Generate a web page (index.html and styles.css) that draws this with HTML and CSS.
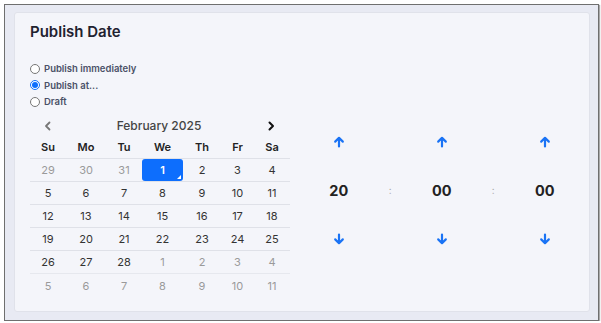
FILE: index.html
```html
<!DOCTYPE html>
<html>
<head>
  <title>Publish Date</title>
  <link rel="stylesheet" href="styles.css">
</head>
<body>
  <div class="frame">
    <div class="card">
      <h2 class="card-title">Publish Date</h2>

      <div class="options">
        <label class="option"><input type="radio" name="mode" value="now"> Publish immediately</label>
        <label class="option"><input type="radio" name="mode" value="at" checked> Publish at...</label>
        <label class="option"><input type="radio" name="mode" value="draft"> Draft</label>
      </div>

      <div class="picker">
        <div class="calendar">
          <div class="cal-head">
            <button class="nav prev" type="button">
              <svg width="10" height="10" viewBox="0 0 10 10"><path d="M6.5 1.5 L3 5 L6.5 8.5" fill="none" stroke="currentColor" stroke-width="1.8" stroke-linecap="round" stroke-linejoin="round"/></svg>
            </button>
            <div class="month">February 2025</div>
            <button class="nav next" type="button">
              <svg width="10" height="10" viewBox="0 0 10 10"><path d="M3.5 1.5 L7 5 L3.5 8.5" fill="none" stroke="currentColor" stroke-width="2" stroke-linecap="round" stroke-linejoin="round"/></svg>
            </button>
          </div>

          <div class="grid weekdays">
            <span>Su</span><span>Mo</span><span>Tu</span><span>We</span><span>Th</span><span>Fr</span><span>Sa</span>
          </div>
          <div class="grid week">
            <span class="muted">29</span><span class="muted">30</span><span class="muted">31</span><span class="selected">1</span><span>2</span><span>3</span><span>4</span>
          </div>
          <div class="grid week">
            <span>5</span><span>6</span><span>7</span><span>8</span><span>9</span><span>10</span><span>11</span>
          </div>
          <div class="grid week">
            <span>12</span><span>13</span><span>14</span><span>15</span><span>16</span><span>17</span><span>18</span>
          </div>
          <div class="grid week">
            <span>19</span><span>20</span><span>21</span><span>22</span><span>23</span><span>24</span><span>25</span>
          </div>
          <div class="grid week">
            <span>26</span><span>27</span><span>28</span><span class="muted">1</span><span class="muted">2</span><span class="muted">3</span><span class="muted">4</span>
          </div>
          <div class="grid week">
            <span class="muted">5</span><span class="muted">6</span><span class="muted">7</span><span class="muted">8</span><span class="muted">9</span><span class="muted">10</span><span class="muted">11</span>
          </div>
        </div>

        <div class="time">
          <button class="step" type="button"><svg width="12" height="12" viewBox="0 0 12 12"><path d="M6 10.5 V2 M2.2 5.6 L6 1.8 L9.8 5.6" fill="none" stroke="currentColor" stroke-width="2.2" stroke-linecap="round" stroke-linejoin="round"/></svg></button>
          <span></span>
          <button class="step" type="button"><svg width="12" height="12" viewBox="0 0 12 12"><path d="M6 10.5 V2 M2.2 5.6 L6 1.8 L9.8 5.6" fill="none" stroke="currentColor" stroke-width="2.2" stroke-linecap="round" stroke-linejoin="round"/></svg></button>
          <span></span>
          <button class="step" type="button"><svg width="12" height="12" viewBox="0 0 12 12"><path d="M6 10.5 V2 M2.2 5.6 L6 1.8 L9.8 5.6" fill="none" stroke="currentColor" stroke-width="2.2" stroke-linecap="round" stroke-linejoin="round"/></svg></button>

          <span class="value">20</span>
          <span class="colon">:</span>
          <span class="value">00</span>
          <span class="colon">:</span>
          <span class="value">00</span>

          <button class="step" type="button"><svg width="12" height="12" viewBox="0 0 12 12"><path d="M6 1.5 V10 M2.2 6.4 L6 10.2 L9.8 6.4" fill="none" stroke="currentColor" stroke-width="2.2" stroke-linecap="round" stroke-linejoin="round"/></svg></button>
          <span></span>
          <button class="step" type="button"><svg width="12" height="12" viewBox="0 0 12 12"><path d="M6 1.5 V10 M2.2 6.4 L6 10.2 L9.8 6.4" fill="none" stroke="currentColor" stroke-width="2.2" stroke-linecap="round" stroke-linejoin="round"/></svg></button>
          <span></span>
          <button class="step" type="button"><svg width="12" height="12" viewBox="0 0 12 12"><path d="M6 1.5 V10 M2.2 6.4 L6 10.2 L9.8 6.4" fill="none" stroke="currentColor" stroke-width="2.2" stroke-linecap="round" stroke-linejoin="round"/></svg></button>
        </div>
      </div>
    </div>
  </div>
</body>
</html>
```

FILE: styles.css
```css
body {
  margin: 0;
  background: #fff;
  font-family: Inter, "Noto Sans", sans-serif;
  color: #222;
}
.frame {
  width: 576px;
  height: 300px;
  margin: 4px 0 0 4px;
  padding: 7px 8px 8px 9px;
  border: 1px solid #6f6f6f;
  background: #e8eaf3;
  box-shadow: 1px 1px 1px #aaa;
}
.card {
  box-sizing: border-box;
  height: 300px;
  padding: 9px 15px 0 15px;
  background: #f4f5fa;
  border: 1px solid #e0e2ea;
  border-radius: 3px;
}
.card-title {
  margin: 0;
  font-size: 15px;
  font-weight: 600;
  color: #1f2230;
  line-height: 20px;
}
.options {
  margin-top: 20px;
  display: flex;
  flex-direction: column;
  gap: 3px;
}
.option {
  display: flex;
  align-items: center;
  gap: 4px;
  height: 13.5px;
  font-size: 9.5px;
  font-weight: 600;
  color: #4b5168;
}
.option input {
  width: 10px;
  height: 10px;
  margin: 0;
  accent-color: #0d6efd;
}
.picker {
  display: flex;
  margin-top: 7px;
}
.calendar {
  width: 260px;
}
.cal-head {
  display: flex;
  align-items: center;
  height: 20px;
}
.nav {
  width: 36px;
  height: 20px;
  padding: 0;
  border: none;
  background: none;
  display: flex;
  align-items: center;
  justify-content: center;
}
.prev {
  color: #777;
}
.next {
  color: #111;
  width: 38px;
}
.month {
  flex: 1;
  text-align: center;
  font-size: 12px;
  font-weight: 500;
  color: #444;
}
.grid {
  display: grid;
  grid-template-columns: 36px 40px 36px 41px 38px 33px 36px;
  font-size: 11px;
  text-align: center;
}
.weekdays {
  height: 22px;
  align-items: center;
  font-weight: 600;
  color: #222;
}
.week {
  box-sizing: border-box;
  height: 23.2px;
  border-top: 1px solid #dfe1e8;
  align-items: center;
  color: #333;
}
.week span {
  height: 100%;
  display: flex;
  align-items: center;
  justify-content: center;
}
.week:last-child {
  border-top-color: #e6e8ee;
}
.muted {
  color: #9a9a9a;
}
.selected {
  position: relative;
  background: #0d6efd;
  color: #fff;
  border-radius: 3px;
  font-weight: 600;
}
.selected::after {
  content: "";
  position: absolute;
  right: 2px;
  bottom: 2px;
  border-left: 4px solid transparent;
  border-bottom: 4px solid #fff;
}
.time {
  margin-left: 23px;
  margin-top: 2px;
  display: grid;
  grid-template-columns: repeat(5, 51.5px);
  grid-template-rows: repeat(3, 48.5px);
  align-items: center;
  justify-items: center;
  align-self: flex-start;
}
.step {
  padding: 0;
  border: none;
  background: none;
  color: #1a73f5;
  display: flex;
}
.value {
  font-size: 14.5px;
  font-weight: 700;
  color: #222;
}
.colon {
  font-size: 10px;
  color: #aaa;
}
```
